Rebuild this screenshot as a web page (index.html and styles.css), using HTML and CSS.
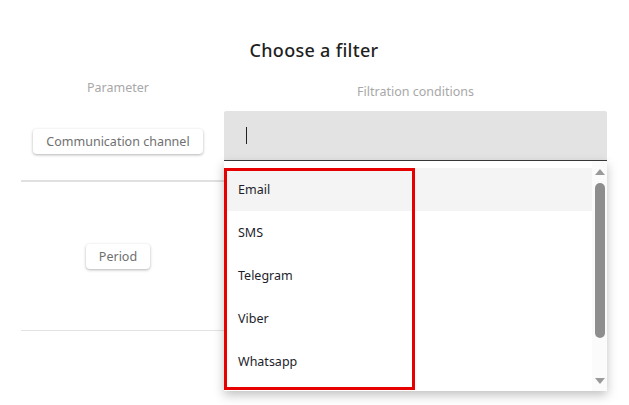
FILE: index.html
```html
<!DOCTYPE html>
<html lang="en">
<head>
<meta charset="utf-8">
<title>Choose a filter</title>
<link rel="stylesheet" href="styles.css">
</head>
<body>
<div class="page">
  <h1 class="title">Choose a filter</h1>
  <div class="grid">
    <div class="head head-param">Parameter</div>
    <div class="head head-cond">Filtration conditions</div>

    <div class="cell param row1"><span class="chip">Communication channel</span></div>
    <div class="cell cond row1">
      <div class="combo">
        <div class="input"><span class="caret"></span></div>
        <div class="dropdown">
          <ul class="options">
            <li class="option active">Email</li>
            <li class="option">SMS</li>
            <li class="option">Telegram</li>
            <li class="option">Viber</li>
            <li class="option">Whatsapp</li>
          </ul>
          <div class="scrollbar">
            <span class="arrow up"></span>
            <span class="thumb"></span>
            <span class="arrow down"></span>
          </div>
          <div class="highlight"></div>
        </div>
      </div>
    </div>

    <div class="cell param row2"><span class="chip">Period</span></div>
    <div class="cell cond row2"></div>
  </div>
</div>
</body>
</html>
```

FILE: styles.css
```css
* { box-sizing: border-box; }
html, body { margin: 0; padding: 0; background: #fff; }
body { font-family: "Noto Sans", "Open Sans", sans-serif; color: #222; }

.page { padding: 0 22px 0 21px; min-height: 405px; }

.title {
  margin: 0;
  padding-top: 38px;
  height: 62px;
  line-height: 24px;
  font-size: 18px;
  font-weight: 500;
  text-align: center;
  color: #1f1f1f;
  letter-spacing: 0.3px;
}

.grid {
  display: grid;
  grid-template-columns: 203px 383px;
  grid-template-rows: 40px 80px 149px;
}

.head {
  font-size: 12.5px;
  line-height: 16px;
  color: #a8a8a8;
  text-align: center;
}
.head-param { padding: 18px 9px 0 0; }
.head-cond { padding-top: 22px; }

.cell { display: flex; align-items: center; justify-content: center; }
.param { padding-right: 9px; }
.row1 { border-bottom: 2px solid #e0e0e0; }
.row2 { border-bottom: 1px solid #e3e3e3; }
.cond.row1 { align-items: flex-start; position: relative; z-index: 2; }

.chip {
  display: inline-block;
  height: 25px;
  line-height: 25px;
  padding: 0 13px;
  font-size: 12.5px;
  color: #6f6f6f;
  background: #fff;
  border-radius: 4px;
  box-shadow: 0 1px 3px rgba(0,0,0,0.3);
}

.combo { position: relative; width: 100%; margin-top: 9px; }

.input {
  height: 50px;
  background: #e3e3e3;
  border-bottom: 1px solid #3a3a3a;
  border-radius: 2px 2px 0 0;
  display: flex;
  align-items: center;
  padding-left: 22px;
}
.caret { width: 1px; height: 17px; background: #222; }

.dropdown {
  position: absolute;
  top: 100%;
  left: 0;
  right: 0;
  height: 230px;
  background: #fff;
  box-shadow: 0 4px 10px rgba(0,0,0,0.25);
  display: flex;
}

.options {
  list-style: none;
  margin: 0;
  padding: 7px 0 8px;
  flex: 1;
}
.option {
  height: 43px;
  line-height: 43px;
  padding-left: 14px;
  font-size: 12.5px;
  color: #1d1d2b;
}
.option.active { background: #f4f4f4; }

.scrollbar {
  width: 15px;
  display: flex;
  flex-direction: column;
  align-items: center;
  padding: 8px 0 7px;
  background: #fbfbfb;
}
.arrow { width: 0; height: 0; border-left: 5px solid transparent; border-right: 5px solid transparent; }
.arrow.up { border-bottom: 6px solid #9a9a9a; }
.arrow.down { border-top: 6px solid #9a9a9a; }
.thumb {
  width: 10px;
  height: 155px;
  margin: 8px 0 auto;
  background: #8e8e8e;
  border-radius: 5px;
}

.highlight {
  position: absolute;
  left: 0;
  top: 7px;
  width: 191px;
  height: 222px;
  border: 3px solid #e60000;
  pointer-events: none;
}
```
